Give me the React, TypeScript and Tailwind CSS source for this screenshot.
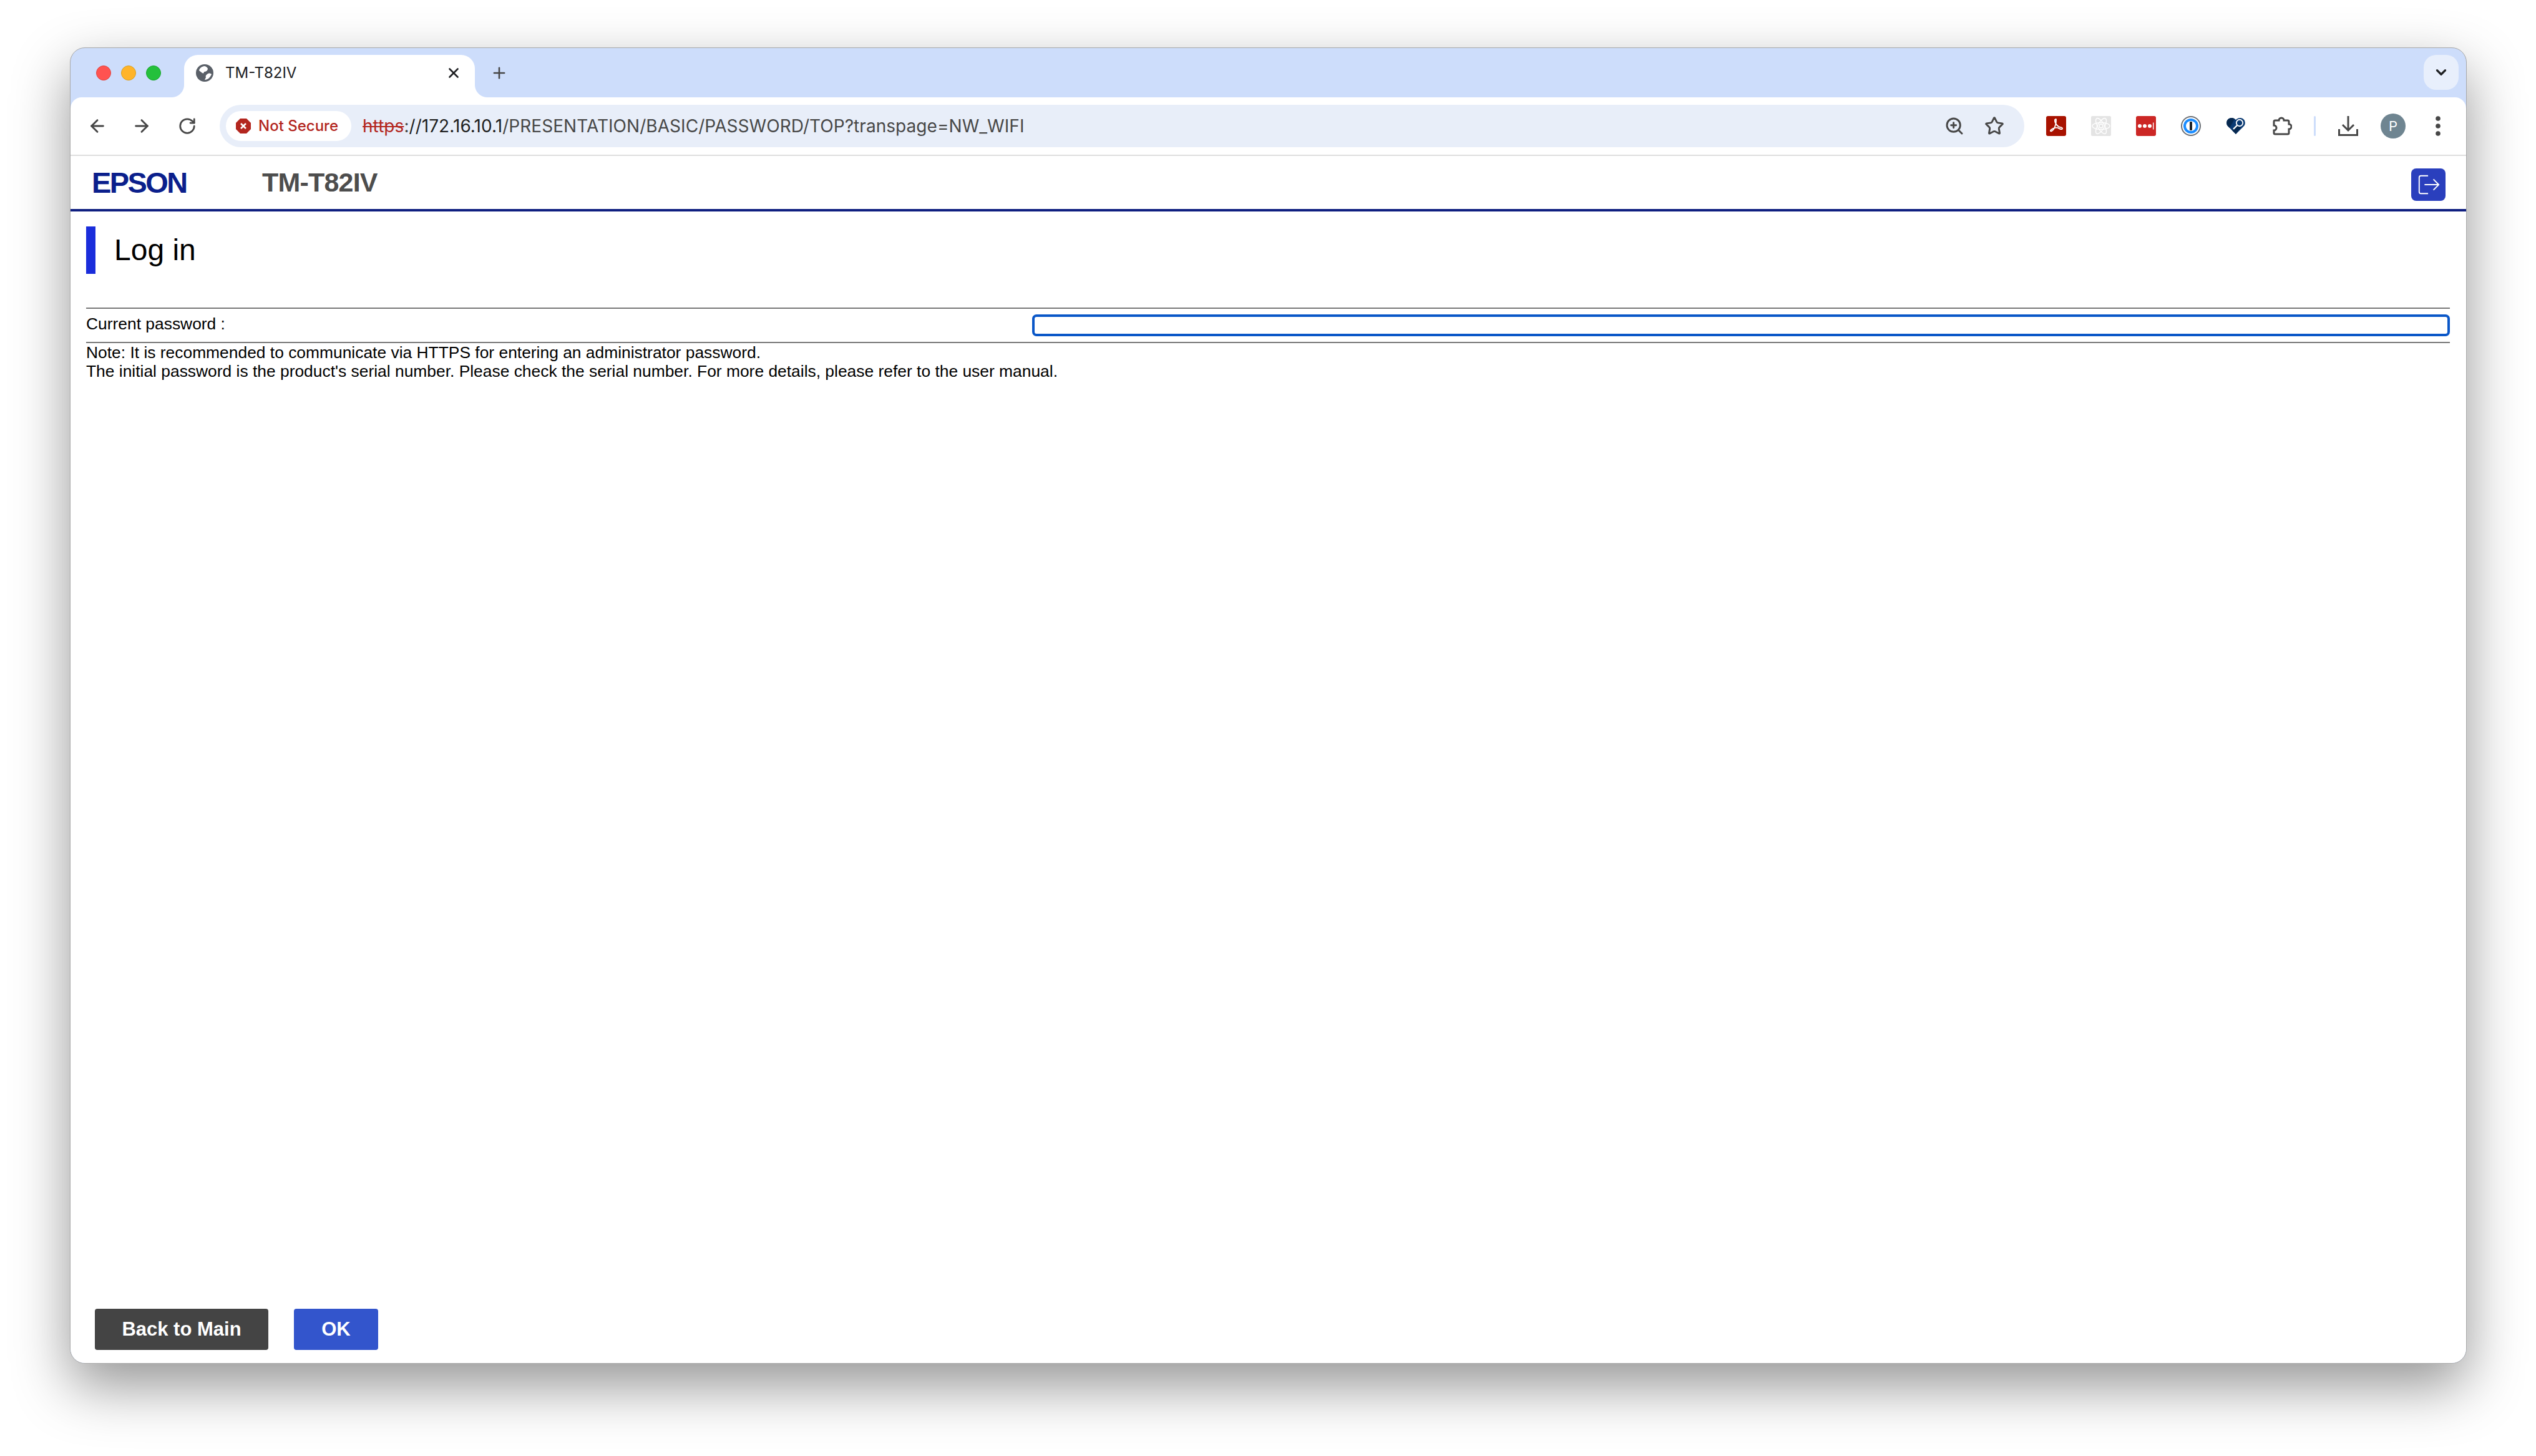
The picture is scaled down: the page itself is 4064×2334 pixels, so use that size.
import React from "react";
import { ArrowLeft, ArrowRight, RotateCw, X, Plus, ChevronDown, ZoomIn, Star } from "lucide-react";

const sans = "font-['Liberation_Sans',Arial,sans-serif]";
const ui = "font-['Inter','Noto_Sans',sans-serif]";

function Globe() {
  return (
    <svg viewBox="0 0 28 28" className="h-[28px] w-[28px]">
      <circle cx="14" cy="14" r="14" fill="#5a6068" />
      <path d="M13 3c-4 1-7 3-8 7l5 4c2 1 3 0 3-2 3 0 6-2 6-5-1-2-3-4-6-4zM25 16c-2-2-5-2-7 0-2 1-3 3-2 5l-2 4c5 0 9-4 11-9z" fill="#ffffff" />
    </svg>
  );
}

function PdfIcon() {
  return (
    <svg viewBox="0 0 32 32" className="h-[32px] w-[32px]">
      <rect width="32" height="32" rx="3" fill="#a81200" />
      <path d="M14 6c-1 4 3 9 6 11 2 1 6 1 6 3s-4 1-7-1c-3-1-8 0-11 3-2 2-1 3 1 2 3-2 5-6 6-10 1-3 1-6 1-8s-1-1-2 0z" fill="none" stroke="#fff" strokeWidth="1.8" />
    </svg>
  );
}

function ReactIcon() {
  return (
    <svg viewBox="0 0 32 32" className="h-[32px] w-[32px]">
      <rect width="32" height="32" rx="2" fill="#e4e4e4" />
      <g fill="none" stroke="#fff" strokeWidth="1.4">
        <ellipse cx="16" cy="16" rx="14" ry="5.5" />
        <ellipse cx="16" cy="16" rx="14" ry="5.5" transform="rotate(60 16 16)" />
        <ellipse cx="16" cy="16" rx="14" ry="5.5" transform="rotate(120 16 16)" />
        <circle cx="16" cy="16" r="3" />
      </g>
    </svg>
  );
}

function LastPass() {
  return (
    <svg viewBox="0 0 32 32" className="h-[32px] w-[32px]">
      <rect width="32" height="32" rx="3" fill="#cc2725" />
      <circle cx="6" cy="16" r="3" fill="#fff" />
      <circle cx="14" cy="16" r="3" fill="#fff" />
      <circle cx="22" cy="16" r="3" fill="#fff" />
      <rect x="27" y="10.5" width="1.4" height="11" fill="#fff" />
    </svg>
  );
}

function OnePassword() {
  return (
    <svg viewBox="0 0 32 32" className="h-[32px] w-[32px]">
      <circle cx="16" cy="16" r="15" fill="#fff" stroke="#6b6f75" strokeWidth="2" />
      <circle cx="16" cy="16" r="12" fill="#1a8cff" />
      <circle cx="16" cy="16" r="8" fill="#fff" />
      <rect x="14" y="9" width="4" height="14" rx="1" fill="#1f2328" />
    </svg>
  );
}

function HeartSearch() {
  return (
    <svg viewBox="0 0 32 32" className="h-[32px] w-[32px]">
      <path d="M16 29 3 16C-1 11 2 3 9 3c3 0 5 1 7 3 2-2 4-3 7-3 7 0 10 8 6 13z" fill="#0b3a73" />
      <path d="M3 16C-1 11 2 3 9 3c2 0 4 .6 5 1.6L6 19zM16 29l-6-6L20 14l4 4z" fill="#07284f" />
      <circle cx="22" cy="11" r="5.2" fill="#0b3a73" stroke="#fff" strokeWidth="1.9" />
      <path d="m18 15-6 6" stroke="#fff" strokeWidth="2.4" />
    </svg>
  );
}

function PuzzleIcon() {
  return (
    <svg viewBox="0 0 32 32" className="h-[32px] w-[32px]" fill="none" stroke="#474747" strokeWidth="3">
      <path d="M5 7h6a4 4 0 0 1 8 0h6a2 2 0 0 1 2 2v4a4 4 0 0 1 0 8v6a2 2 0 0 1-2 2H5a2 2 0 0 1-2-2v-4a4 4 0 0 0 0-8V9a2 2 0 0 1 2-2z" />
    </svg>
  );
}

function DownloadIcon() {
  return (
    <svg viewBox="0 0 32 32" className="h-[32px] w-[32px]" fill="none" stroke="#474747" strokeWidth="3">
      <path d="M16 0v22M7 14l9 9 9-9M1.500 21v9.500h29V21" />
    </svg>
  );
}

function MenuDots() {
  return (
    <svg viewBox="0 0 8 32" className="h-[32px] w-[8px]" fill="#474747">
      <circle cx="4" cy="4" r="3.800" />
      <circle cx="4" cy="16" r="3.800" />
      <circle cx="4" cy="28" r="3.800" />
    </svg>
  );
}

function TabCorner({ side }: { side: "left" | "right" }) {
  return side === "left" ? (
    <span className="absolute bottom-0 left-[-20px] h-[20px] w-[20px] bg-[radial-gradient(circle_at_0_0,#cdddfb_19.5px,#ffffff_20.5px)]" />
  ) : (
    <span className="absolute bottom-0 right-[-20px] h-[20px] w-[20px] bg-[radial-gradient(circle_at_100%_0,#cdddfb_19.5px,#ffffff_20.5px)]" />
  );
}

export default function App() {
  return (
    <div className="h-[2334px] w-[4064px] bg-white pl-[112px] pt-[76px]">
      <div className="flex h-[2110px] w-[3841px] flex-col overflow-hidden rounded-[24px] border border-[#a8a8a8] bg-[#cdddfb] shadow-[0_36px_90px_rgba(0,0,0,0.42)]">
        {/* Tab strip */}
        <div className={`flex h-[79px] items-end ${ui}`}>
          <div className="flex h-[68px] w-[182px] shrink-0 items-start gap-[16px] self-end pl-[41px] pt-[17px]">
            <span className="h-[24px] w-[24px] rounded-full border border-[#e0443e] bg-[#ff5350]" />
            <span className="h-[24px] w-[24px] rounded-full border border-[#d9a020] bg-[#ffb429]" />
            <span className="h-[24px] w-[24px] rounded-full border border-[#1aa52b] bg-[#24c03c]" />
          </div>
          <div className="relative flex h-[68px] w-[466px] items-center rounded-t-[22px] bg-white pb-[10px] pl-[19px] pr-[21px]">
            <TabCorner side="left" />
            <TabCorner side="right" />
            <Globe />
            <span className="ml-[19px] flex-1 text-[24px] leading-none text-[#202124]">TM-T82IV</span>
            <X size={26} strokeWidth={2.5} className="text-[#202124]" />
          </div>
          <div className="flex h-[68px] items-center pb-[10px] pl-[25px]">
            <Plus size={28} strokeWidth={2.2} className="text-[#474747]" />
          </div>
          <div className="flex h-[68px] flex-1 justify-end pr-[12px]">
            <div className="flex h-[56px] w-[56px] items-center justify-center rounded-[20px] bg-[#e8effc]">
              <ChevronDown size={26} strokeWidth={3} className="text-[#202124]" />
            </div>
          </div>
        </div>

        {/* Toolbar */}
        <div className={`flex h-[94px] items-center rounded-t-[18px] border-b-[2px] border-[#dedede] bg-white ${ui}`}>
          <div className="flex w-[239px] shrink-0 items-center gap-[39px] pl-[27px] text-[#474747]">
            <ArrowLeft size={32} strokeWidth={2.2} />
            <ArrowRight size={32} strokeWidth={2.2} />
            <RotateCw size={30} strokeWidth={2.2} className="ml-[3px]" />
          </div>
          <div className="flex h-[68px] w-[2892px] items-center rounded-full bg-[#e8eef9] pl-[10px] pr-[32px]">
            <div className="flex h-[48px] w-[201px] items-center gap-[12px] rounded-full bg-white pl-[16px]">
              <svg viewBox="0 0 24 24" className="h-[24px] w-[24px]">
                <path d="M7 0h10l7 7v10l-7 7H7l-7-7V7z" fill="#b3261e" />
                <path d="m8 8 8 8M16 8l-8 8" stroke="#fff" strokeWidth="2.6" />
              </svg>
              <span className="text-[24px] font-medium leading-none text-[#b3261e]">Not Secure</span>
            </div>
            <div className="ml-[18px] flex-1 text-[28px] leading-none tracking-[0.05px] text-[#474747]">
              <span className="text-[#b3261e] line-through">https</span>
              <span>:</span>
              <span className="text-[#1f1f1f]">//172.16.10.1</span>
              <span>/PRESENTATION/BASIC/PASSWORD/TOP?transpage=NW_WIFI</span>
            </div>
            <ZoomIn size={32} strokeWidth={2.2} className="text-[#474747]" />
            <Star size={32} strokeWidth={2.2} className="ml-[32px] text-[#474747]" />
          </div>
          <div className="flex items-center pl-[35px] text-[#474747]">
            <PdfIcon />
            <div className="ml-[40px]"><ReactIcon /></div>
            <div className="ml-[40px]"><LastPass /></div>
            <div className="ml-[40px]"><OnePassword /></div>
            <div className="ml-[40px]"><HeartSearch /></div>
            <div className="ml-[42px]"><PuzzleIcon /></div>
            <div className="ml-[35px] mr-[36px] h-[32px] w-[3px] rounded-full bg-[#cdddfb]" />
            <DownloadIcon />
            <div className="ml-[36px] flex h-[40px] w-[40px] items-center justify-center rounded-full bg-[#6f8591] text-[22px] text-white">P</div>
            <div className="ml-[48px] flex"><MenuDots /></div>
          </div>
        </div>

        {/* Page */}
        <div className={`flex flex-1 flex-col bg-white ${sans}`}>
          <header className="flex h-[89px] items-center border-b-[4px] border-[#0f1f80] pl-[34px] pr-[33px]">
            <span className="w-[273px] text-[47px] font-bold leading-none tracking-[-2.6px] text-[#0b1f8c]">EPSON</span>
            <span className="flex-1 text-[43px] font-bold leading-none tracking-[-0.8px] text-[#4d4d4d]">TM-T82IV</span>
            <button className="mt-[6px] flex h-[52px] w-[55px] items-center justify-center rounded-[8px] bg-[#2a3fbd] text-white">
              <svg viewBox="0 0 40 40" className="h-[38px] w-[38px]" fill="none" stroke="currentColor" strokeWidth="2">
                <path d="M19 5H7a3 3 0 0 0-3 3v24a3 3 0 0 0 3 3h12" />
                <path d="M13 20h23M28 11l9 9-9 9" />
              </svg>
            </button>
          </header>
          <main className="flex flex-1 flex-col pl-[25px] pr-[26px] pt-[24px]">
            <h1 className="flex h-[76px] items-center border-l-[15px] border-[#1a2ddb] pl-[30px] text-[48px] font-normal leading-none text-black">Log in</h1>
            <div className="mt-[54px] flex h-[57px] items-center border-y-[2px] border-[#777777]">
              <label className="w-[1516px] pb-[5px] text-[26.4px] leading-none text-black">Current password :</label>
              <input className="mb-[1px] h-[35px] flex-1 rounded-[7px] border-[4px] border-[#0a57c8] bg-white outline-none" />
            </div>
            <p className="text-[26.4px] leading-[30px] text-black">
              Note: It is recommended to communicate via HTTPS for entering an administrator password.
              <br />
              The initial password is the product's serial number. Please check the serial number. For more details, please refer to the user manual.
            </p>
            <div className="mb-[21px] ml-[14px] mt-auto flex gap-[41px]">
              <button className="h-[66px] w-[278px] rounded-[4px] bg-[#444444] text-[31px] font-bold text-white">Back to Main</button>
              <button className="h-[66px] w-[135px] rounded-[4px] bg-[#3355cc] text-[31px] font-bold text-white">OK</button>
            </div>
          </main>
        </div>
      </div>
    </div>
  );
}
